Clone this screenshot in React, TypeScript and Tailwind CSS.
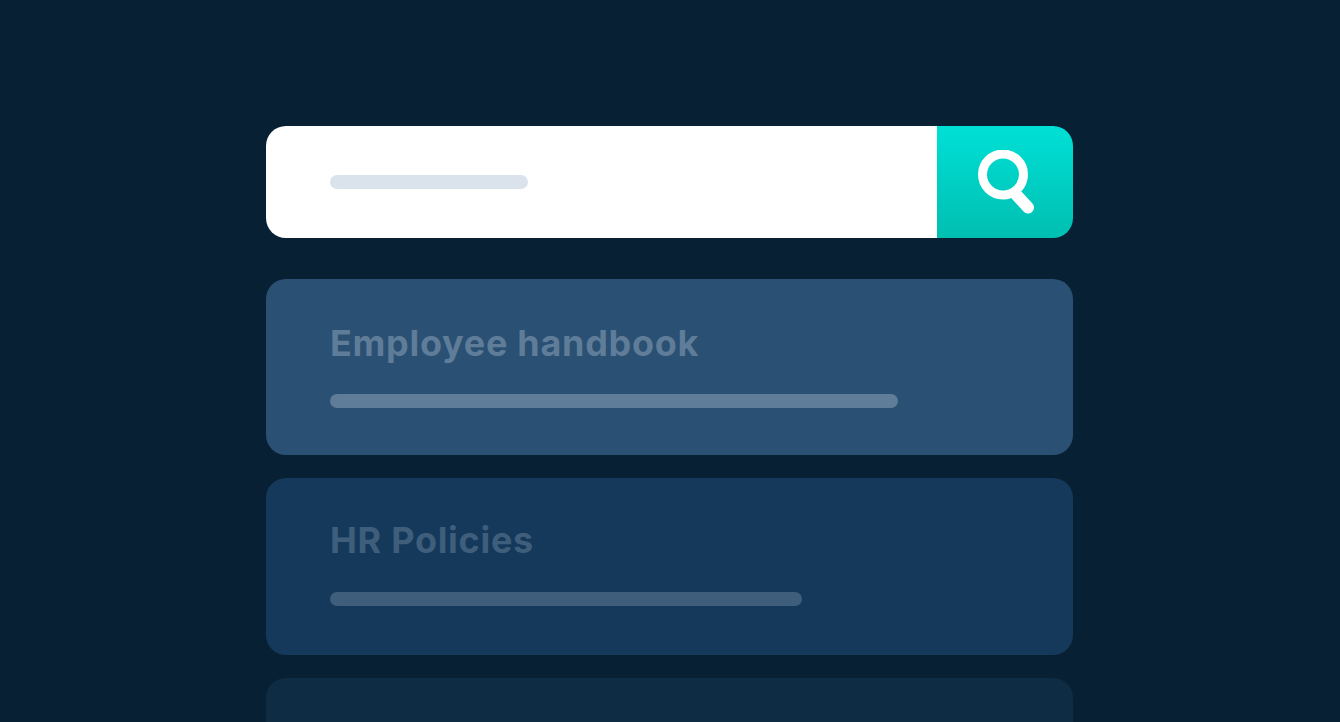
export default function App() {
  return (
    <div className="h-[722px] overflow-hidden bg-[#082033] pt-[126px] pl-[266px] font-['Inter',sans-serif]">
      <div className="flex w-[807px] flex-col">
        <div className="flex h-[112px]">
          <div className="flex flex-1 items-center rounded-l-[20px] bg-white pl-[64px]">
            <div className="h-[14px] w-[198px] rounded-[7px] bg-[#dae2ec]"></div>
          </div>
          <div className="flex w-[136px] items-start rounded-r-[20px] bg-gradient-to-b from-[#00e0d6] to-[#00bfb1] pt-[24px] pl-[41px]">
            <svg width="58" height="64" viewBox="0 0 58 64" fill="none">
              <circle cx="25" cy="24.5" r="20.5" stroke="white" strokeWidth="9" />
              <path d="M38.5 45 L50 57.5" stroke="white" strokeWidth="12" strokeLinecap="round" />
            </svg>
          </div>
        </div>
        <div className="mt-[41px] h-[176px] rounded-[20px] bg-[#2a5073] pt-[42px] pl-[64px]">
          <div className="text-[36px] leading-[44px] font-bold tracking-[0.7px] text-[#5f7c98]">Employee handbook</div>
          <div className="mt-[29px] h-[14px] w-[568px] rounded-[7px] bg-[#5f7c98]"></div>
        </div>
        <div className="mt-[23px] h-[177px] rounded-[20px] bg-[#15395b] pt-[40px] pl-[64px]">
          <div className="text-[36px] leading-[44px] font-bold tracking-[0.7px] text-[#3f5e7b]">HR Policies</div>
          <div className="mt-[30px] h-[14px] w-[472px] rounded-[7px] bg-[#3f5e7b]"></div>
        </div>
        <div className="mt-[23px] h-[177px] rounded-[20px] bg-[#0f2c45]"></div>
      </div>
    </div>
  );
}
